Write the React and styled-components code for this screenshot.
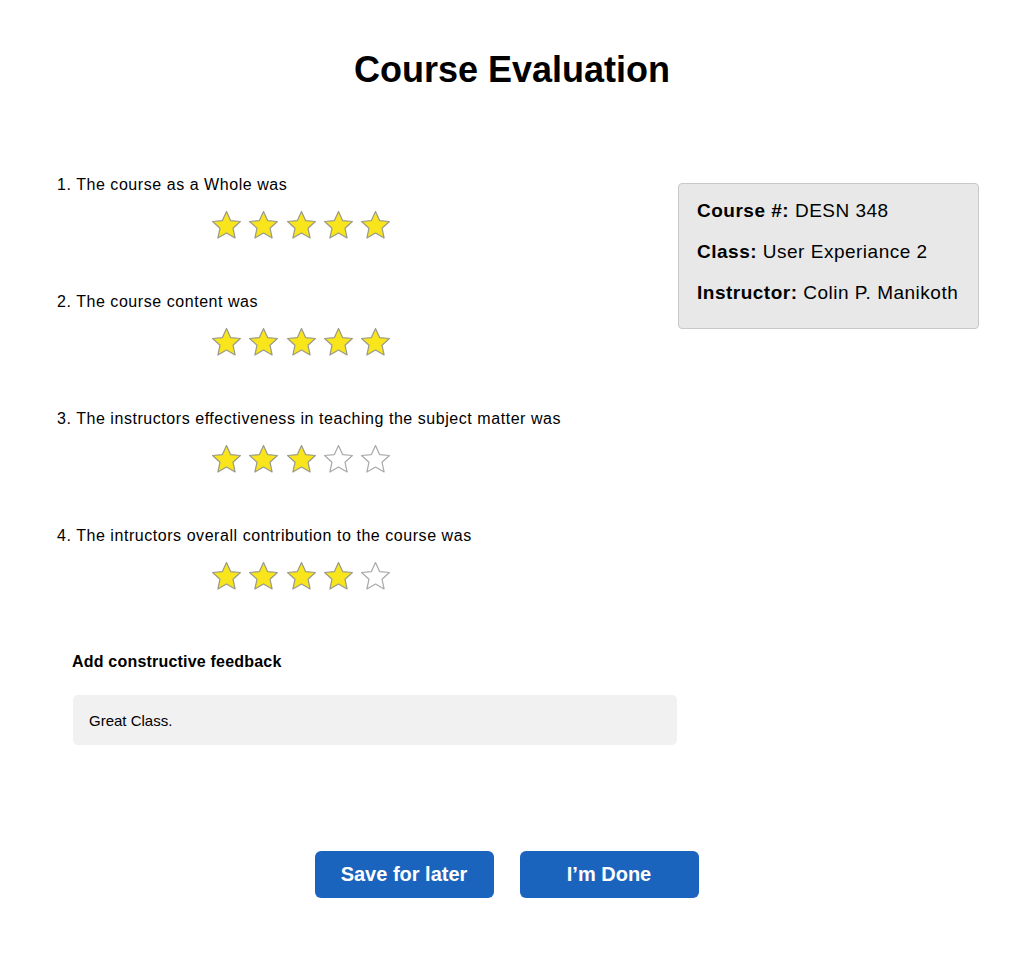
import React from 'react';
import styled, { createGlobalStyle } from 'styled-components';

const GlobalStyle = createGlobalStyle`
  body {
    margin: 0;
    background: #fff;
    font-family: "Liberation Sans", Arial, Helvetica, sans-serif;
    color: #000;
  }
`;

const questions = [
  { text: '1. The course as a Whole was', rating: 5 },
  { text: '2. The course content was', rating: 5 },
  { text: '3. The instructors effectiveness in teaching the subject matter was', rating: 3 },
  { text: '4. The intructors overall contribution to the course was', rating: 4 },
];

const Star = ({ filled }) => (
  <svg width="31" height="30" viewBox="0 0 31 30">
    <polygon
      points="15.5,1.5 19.6,10.6 29.4,11.5 22,18.2 24.1,28 15.5,23 6.9,28 9,18.2 1.6,11.5 11.4,10.6"
      fill={filled ? '#f8e51c' : '#fff'}
      stroke={filled ? '#9a9a8a' : '#a9a9a9'}
      strokeWidth="1.2"
      strokeLinejoin="round"
    />
  </svg>
);

const App = () => (
  <Page>
    <GlobalStyle />
    <Title>Course Evaluation</Title>
    <Main>
      <Questions>
        {questions.map((q) => (
          <Question key={q.text}>
            <QuestionText>{q.text}</QuestionText>
            <Stars>
              {[1, 2, 3, 4, 5].map((n) => (
                <Star key={n} filled={n <= q.rating} />
              ))}
            </Stars>
          </Question>
        ))}
        <Feedback>
          <FeedbackLabel>Add constructive feedback</FeedbackLabel>
          <FeedbackBox>Great Class.</FeedbackBox>
        </Feedback>
      </Questions>
      <InfoCard>
        <InfoLine><strong>Course #:</strong> DESN 348</InfoLine>
        <InfoLine><strong>Class:</strong> User Experiance 2</InfoLine>
        <InfoLine><strong>Instructor:</strong> Colin P. Manikoth</InfoLine>
      </InfoCard>
    </Main>
    <Actions>
      <Button>Save for later</Button>
      <Button>I’m Done</Button>
    </Actions>
  </Page>
);

const Page = styled.div`
  width: 1024px;
  min-height: 978px;
  box-sizing: border-box;
  padding-top: 48px;
`;

const Title = styled.h1`
  margin: 0;
  text-align: center;
  font-size: 36px;
  font-weight: bold;
  line-height: 44px;
`;

const Main = styled.div`
  display: flex;
  justify-content: space-between;
  align-items: flex-start;
  padding: 83px 45px 0 57px;
`;

const Questions = styled.div`
  width: 620px;
`;

const Question = styled.section`
  height: 117px;
`;

const QuestionText = styled.p`
  margin: 0;
  font-size: 16px;
  line-height: 20px;
  letter-spacing: 0.55px;
`;

const Stars = styled.div`
  display: flex;
  gap: 6.25px;
  margin: 15px 0 0 154px;
`;

const Feedback = styled.div`
  padding: 9px 0 0 15px;
`;

const FeedbackLabel = styled.h3`
  margin: 0;
  font-size: 16px;
  line-height: 20px;
  letter-spacing: 0.2px;
  font-weight: bold;
`;

const FeedbackBox = styled.div`
  margin: 23px 0 0 1px;
  height: 50px;
  box-sizing: border-box;
  padding: 0 16px;
  display: flex;
  align-items: center;
  background: #f1f1f1;
  border-radius: 5px;
  font-size: 15px;
`;

const InfoCard = styled.aside`
  margin-top: 8px;
  width: 301px;
  box-sizing: border-box;
  padding: 6px 18px 15px;
  background: #e8e8e8;
  border: 1px solid #c9c9c9;
  border-radius: 4px;
`;

const InfoLine = styled.p`
  margin: 0;
  font-size: 19px;
  line-height: 41px;
  letter-spacing: 0.5px;

  strong { font-weight: bold; }
`;

const Actions = styled.div`
  display: flex;
  justify-content: center;
  gap: 26px;
  margin-top: 106px;
  padding-right: 11px;
`;

const Button = styled.button`
  width: 179px;
  height: 47px;
  border: none;
  border-radius: 6px;
  background: #1b64bd;
  color: #fff;
  font-family: "Liberation Sans", Arial, sans-serif;
  font-size: 20px;
  font-weight: bold;
  cursor: pointer;
`;

export default App;
